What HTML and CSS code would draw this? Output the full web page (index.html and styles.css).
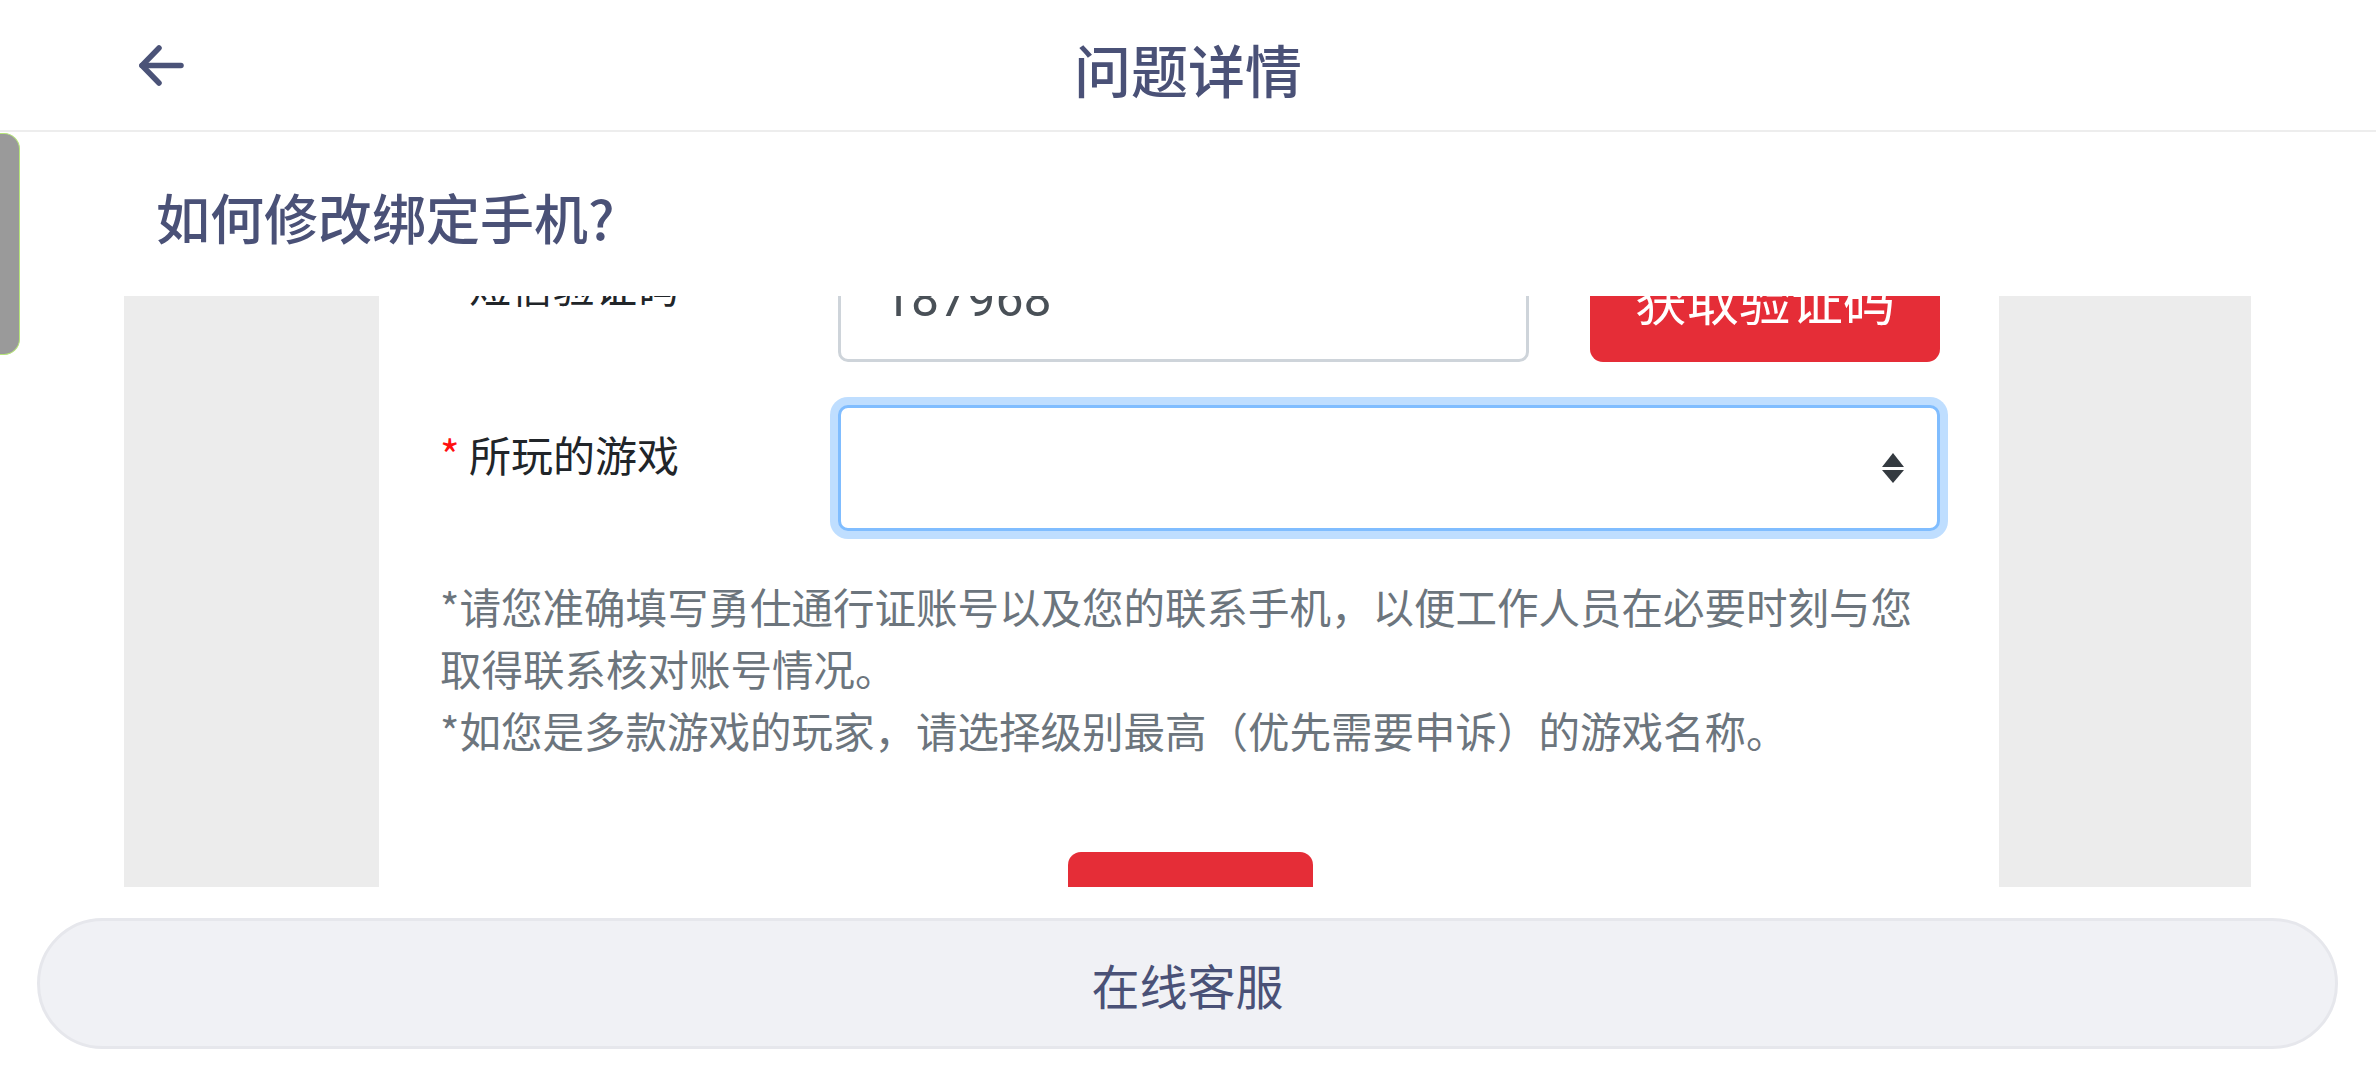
FILE: index.html
```html
<!DOCTYPE html>
<html lang="zh-CN">
<head>
<meta charset="utf-8">
<title>问题详情</title>
<link rel="stylesheet" href="styles.css">
</head>
<body>
<div class="app">
  <header class="topbar">
    <a class="back" href="#" aria-label="返回">
      <svg width="46" height="42" viewBox="0 0 46 42" fill="none" stroke="#4b5378" stroke-width="5.5" stroke-linecap="round" stroke-linejoin="round">
        <path d="M43 20.5H4"/>
        <path d="M21 3L4 20.5L21 38"/>
      </svg>
    </a>
    <h1 class="topbar-title">问题详情</h1>
  </header>

  <div class="side-tab"></div>

  <section class="question">
    <h2 class="question-title">如何修改绑定手机?</h2>
  </section>

  <div class="scroller">
    <div class="gutter"></div>
    <div class="content">
      <div class="scroll-inner">
        <div class="form-row">
          <label class="form-label"><span class="req">*</span> 短信验证码</label>
          <div class="control code-control">
            <div class="input">187968</div>
            <button class="btn btn-red code-btn">获取验证码</button>
          </div>
        </div>
        <div class="form-row">
          <label class="form-label"><span class="req">*</span> 所玩的游戏</label>
          <div class="control">
            <div class="select">
              <svg width="22" height="30" viewBox="0 0 22 30" fill="#343a40">
                <polygon points="11,0 22,14 0,14"/>
                <polygon points="0,17 22,17 11,30"/>
              </svg>
            </div>
          </div>
        </div>
        <p class="help">*请您准确填写勇仕通行证账号以及您的联系手机，以便工作人员在必要时刻与您取得联系核对账号情况。<br>*如您是多款游戏的玩家，请选择级别最高（优先需要申诉）的游戏名称。</p>
        <div class="submit-wrap">
          <button class="btn btn-red submit-btn">提交</button>
        </div>
      </div>
    </div>
    <div class="gutter"></div>
  </div>

  <footer class="bottom">
    <button class="service-btn">在线客服</button>
  </footer>
</div>
</body>
</html>
```

FILE: styles.css
```css
* {
  box-sizing: border-box;
}

html, body {
  margin: 0;
  padding: 0;
  width: 2376px;
  height: 1080px;
  overflow: hidden;
  background: #ffffff;
  font-family: "Noto Sans CJK SC", "Noto Sans", sans-serif;
}

.app {
  position: relative;
  width: 2376px;
  height: 1080px;
  display: flex;
  flex-direction: column;
}

/* Header */
.topbar {
  position: relative;
  height: 132px;
  flex: none;
  border-bottom: 2px solid #ededed;
  display: flex;
  justify-content: center;
  align-items: flex-start;
}

.back {
  position: absolute;
  left: 138px;
  top: 45px;
  width: 46px;
  height: 42px;
  display: block;
}

.back svg {
  display: block;
}

.topbar-title {
  margin: 0;
  padding-top: 38px;
  font-size: 57px;
  line-height: 60px;
  font-weight: 500;
  color: #4a5177;
}

/* floating side handle */
.side-tab {
  position: absolute;
  left: 0;
  top: 133px;
  width: 20px;
  height: 222px;
  background: #9a9a9a;
  border: 1px solid #b6e57a;
  border-left: none;
  border-radius: 0 16px 16px 0;
}

/* Question heading */
.question {
  height: 164px;
  flex: none;
  padding: 57px 0 0 156px;
}

.question-title {
  margin: 0;
  font-size: 54px;
  line-height: 56px;
  font-weight: 500;
  color: #4a5177;
}

/* Scroll area */
.scroller {
  flex: none;
  height: 591px;
  margin: 0 125px 0 124px;
  display: grid;
  grid-template-columns: 255px 1fr 252px;
  overflow: hidden;
}

.gutter {
  background: #ececec;
}

.content {
  background: #ffffff;
  padding: 0 59px 0 61px;
  overflow: hidden;
}

.scroll-inner {
  margin-top: -60px;
}

.form-row {
  display: grid;
  grid-template-columns: 398px 1fr;
  margin-bottom: 43px;
}

.form-label {
  padding-top: 17px;
  font-size: 42px;
  line-height: 63px;
  color: #212529;
}

.req {
  color: #ff1010;
}

.control {
  min-width: 0;
}

.code-control {
  display: flex;
  gap: 61px;
}

.input {
  flex: 1;
  height: 126px;
  border: 3px solid #ced4da;
  border-radius: 10px;
  padding: 0 42px;
  font-family: Roboto, "Noto Sans", sans-serif;
  font-size: 50px;
  line-height: 120px;
  color: #495057;
}

.btn {
  border: none;
  font-family: "Noto Sans CJK SC", sans-serif;
  cursor: pointer;
}

.btn-red {
  background: #e52d37;
  color: #ffffff;
}

.code-btn {
  width: 350px;
  height: 126px;
  border-radius: 13px;
  font-size: 52px;
  line-height: 60px;
  padding: 0;
}

.select {
  height: 126px;
  border: 3px solid #80bdff;
  border-radius: 10px;
  box-shadow: 0 0 0 8px #bfdeff;
  display: flex;
  align-items: center;
  justify-content: flex-end;
  padding-right: 33px;
  background: #ffffff;
}

.select svg {
  display: block;
}

.help {
  margin: 44px 0 0;
  font-size: 41.5px;
  line-height: 62px;
  color: #6c757d;
}

.submit-wrap {
  display: flex;
  justify-content: center;
  margin-top: 91px;
}

.submit-btn {
  width: 245px;
  height: 126px;
  border-radius: 13px;
  font-size: 52px;
  line-height: 60px;
  padding: 0;
}

/* Bottom */
.bottom {
  flex: none;
  padding: 31px 38px 31px 37px;
}

.service-btn {
  width: 100%;
  height: 131px;
  border: 3px solid #e6e7ec;
  border-radius: 66px;
  background: #f0f1f5;
  font-family: "Noto Sans CJK SC", sans-serif;
  font-size: 48px;
  color: #4a5177;
  padding: 0;
}
```
